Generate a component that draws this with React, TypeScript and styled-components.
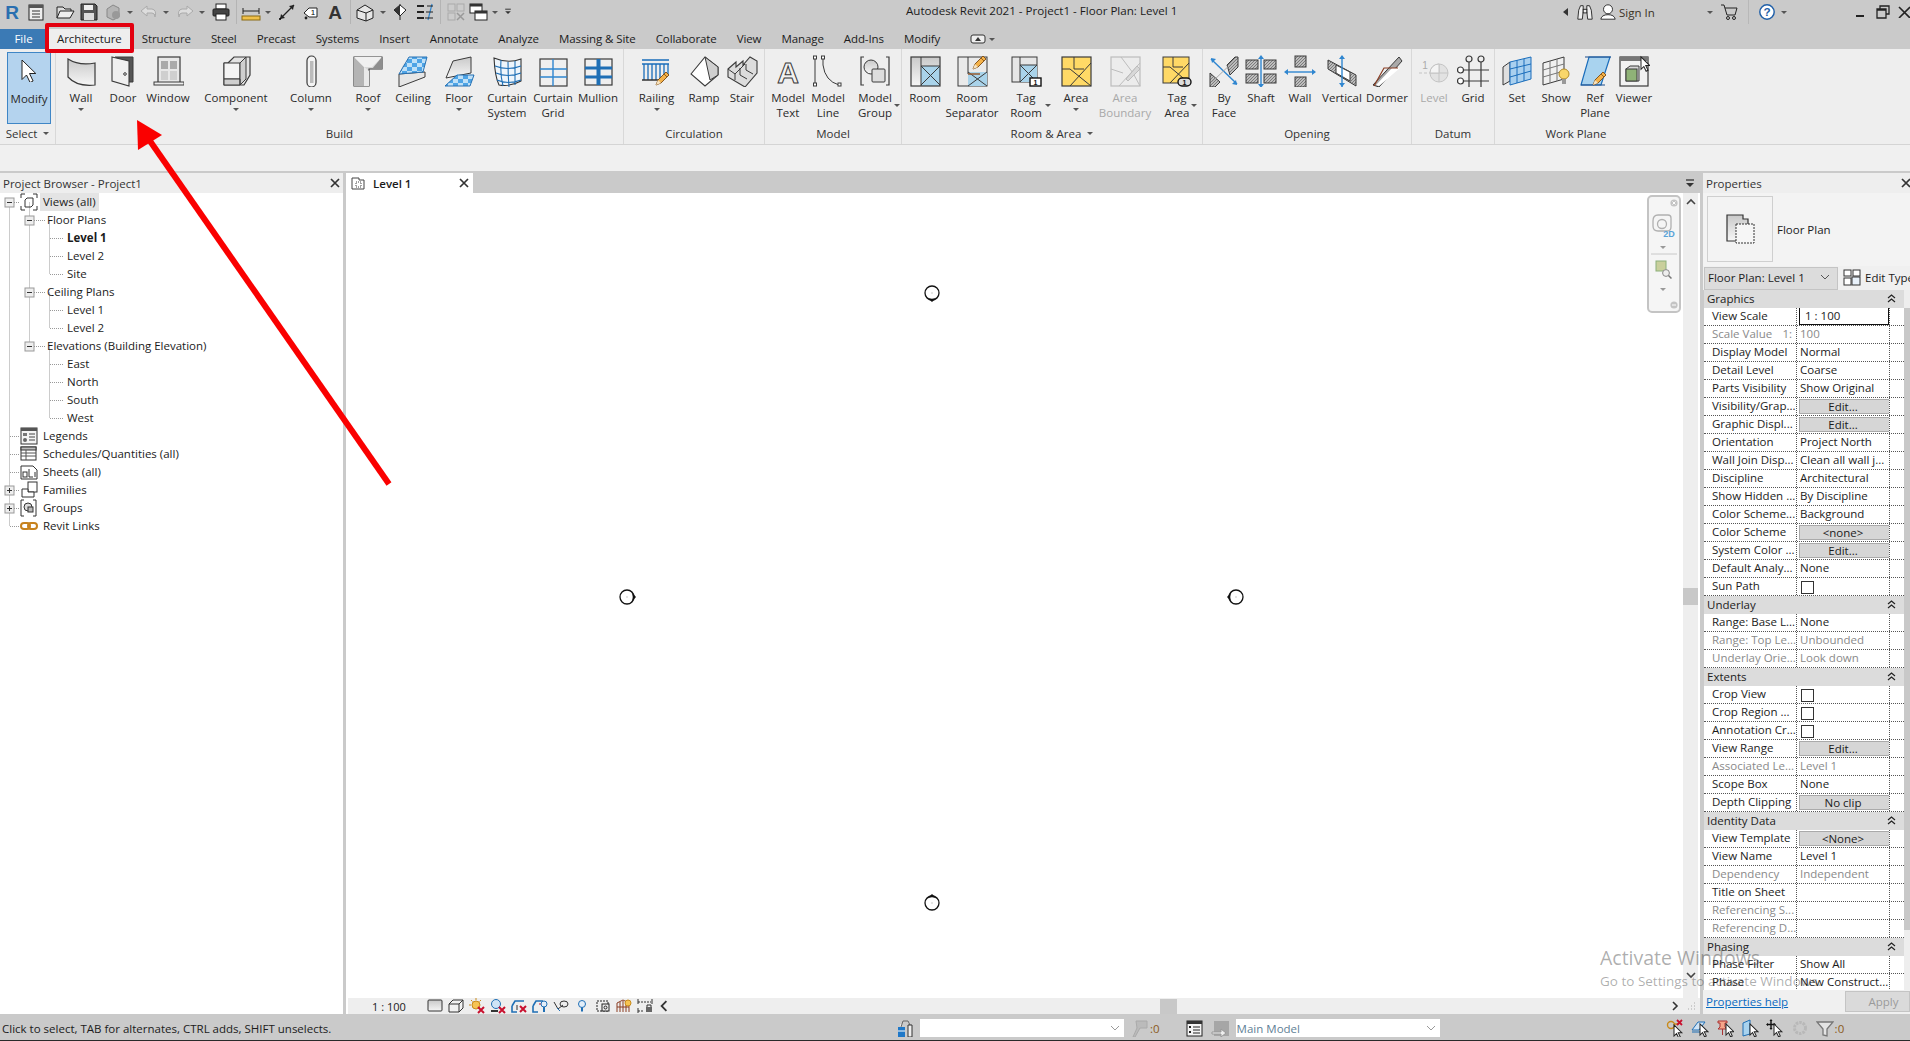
import React from "react";
import styled, { createGlobalStyle } from "styled-components";

const FONT = `"Open Sans","Noto Sans","Liberation Sans",sans-serif`;

const Global = createGlobalStyle`
  html, body { margin: 0; padding: 0; background: #cacaca; overflow: hidden; }
  * { box-sizing: border-box; }
  #root { width: 1910px; height: 1041px; }
`;

const Page = styled.div`
  position: relative; width: 1910px; height: 1041px; background: #cacaca; overflow: hidden;
  display: flex; flex-direction: column;
  font: 11.5px/15px ${FONT}; color: #1b1b1b;
`;

/* ---------- Title bar ---------- */
const TitleBar = styled.div`height: 29px; display: flex; align-items: center; flex: none;`;
const Qat = styled.div`display: flex; align-items: center; padding-bottom: 5px; flex: none;`;
const QatSlot = styled.span<{ $ml: number }>`display: flex; align-items: center; margin-left: ${p => p.$ml}px; flex: none;`;
const QatSep = styled.span<{ $ml: number }>`width: 1px; height: 24px; background: #b4b4b4; margin-left: ${p => p.$ml}px; flex: none;`;
const Caret = styled.span`width: 0; height: 0; border-left: 3px solid transparent; border-right: 3px solid transparent; border-top: 3px solid #555; display: block; flex: none;`;
const WindowTitle = styled.div`margin-left: 391px; margin-top: -9px; white-space: nowrap; flex: none; width: 274px; font-size: 11.6px;`;
const TitleRight = styled.div`display: flex; align-items: center; margin-left: auto; padding-bottom: 5px; flex: none;`;
const SignIn = styled.span`margin-left: 2px; width: 88px; color: #3a3226;`;
const TitleSep = styled.span`width: 1px; height: 24px; background: #b8b8b8; margin: 0 9px;`;
const WinBtn = styled.span<{ $ml: number }>`display: block; margin-left: ${p => p.$ml}px; flex: none;`;

/* ---------- Tabs ---------- */
const TabRow = styled.div`height: 20px; display: flex; flex: none; align-items: stretch;`;
const FileTab = styled.div`width: 47px; background: #3b7ab5; color: #fff; text-align: center; line-height: 20px;`;
const Tab = styled.div<{ $active?: boolean }>`
  padding: 0 10px; line-height: 20px; white-space: nowrap; letter-spacing: -.09px;
  background: ${p => (p.$active ? "#eeeeee" : "transparent")};
`;
const TabExtra = styled.div`display: flex; align-items: center; gap: 3px; margin-left: 20px;`;

/* ---------- Ribbon ---------- */
const Ribbon = styled.div`height: 96px; flex: none; display: flex; background: #eeeeee; border-bottom: 1px solid #d4d4d4;`;
const Panel = styled.div<{ $w: number; $last?: boolean }>`
  width: ${p => p.$w}px; flex: none; display: flex; flex-direction: column;
  border-right: ${p => (p.$last ? "none" : "1px solid #d8d8d8")};
`;
const ToolRow = styled.div`height: 75px; display: flex; flex: none;`;
const PanelTitle = styled.div`height: 20px; padding-bottom: 2px; display: flex; align-items: center; justify-content: center; gap: 6px; color: #333; white-space: nowrap;`;
const Tool = styled.div<{ $w: number; $off?: boolean }>`
  position: relative; width: ${p => p.$w}px; flex: none; display: flex; flex-direction: column; align-items: center;
  color: ${p => (p.$off ? "#a9a9a9" : "#2a2a2a")};
`;
const ToolIcon = styled.div`height: 41px; padding-top: 6px; flex: none; display: flex; justify-content: center;`;
const ToolLabel = styled.div`text-align: center; white-space: nowrap; line-height: 15px;`;
const ToolCaret = styled(Caret)`margin-top: 3px;`;
const SideCaret = styled(Caret)<{ $r: number }>`position: absolute; top: 55px; right: ${p => p.$r}px;`;
const ModifyBtn = styled.div`
  width: 44px; height: 72px; margin: 3px 0 0 7px; flex: none; border: 1px solid #3f86c6;
  background: #b4d3ee; display: flex; flex-direction: column; align-items: center; padding-top: 5px; color: #2a2a2a;
`;
const ModifyLabel = styled.div`margin-top: 9px;`;
const OptionsStrip = styled.div`height: 26px; flex: none; background: #f0f0f0;`;

/* ---------- Main ---------- */
const Main = styled.div`height: 841px; margin-top: 2px; flex: none; display: flex;`;

const Browser = styled.div`width: 343px; flex: none; display: flex; flex-direction: column;`;
const PaneTitle = styled.div`height: 20px; flex: none; display: flex; align-items: center; justify-content: space-between; padding: 0 3px; background: #eeeeee; color: #333; white-space: nowrap;`;
const PropsTitle = styled(PaneTitle)`width: 211px;`;
const Tree = styled.div`position: relative; flex: 1; background: #fff; padding-top: 0;`;
const TreeLines = styled.svg`position: absolute; left: 0; top: 0;`;
const TreeRow = styled.div<{ $pl: number; $bold?: boolean }>`
  position: relative; height: 18px; display: flex; align-items: center; padding-left: ${p => p.$pl}px;
  font-weight: ${p => (p.$bold ? 700 : 400)}; white-space: nowrap;
`;
const TreeIcon = styled.span`width: 18px; height: 18px; margin-right: 5px; display: block; flex: none;`;
const TreeText = styled.span<{ $sel?: boolean }>`
  background: ${p => (p.$sel ? "#e4e4e4" : "transparent")}; height: 18px; line-height: 18px;
  margin-left: ${p => (p.$sel ? "-3px" : "0")}; padding: 0 ${p => (p.$sel ? "3px" : "0")};
`;

const Center = styled.div`width: 356px; flex: 1; display: flex; flex-direction: column; margin-left: 3px; margin-right: 3px;`;
const DocTabs = styled.div`height: 20px; flex: none; display: flex; justify-content: space-between; align-items: center;`;
const DocTab = styled.div`width: 127px; height: 20px; background: #fff; display: flex; align-items: center; padding: 0 4px 0 4px; font-weight: 600; gap: 7px;`;
const DocTabName = styled.span`flex: 1;`;
const DocMenu = styled.span`display: block; margin-right: 5px;`;
const CanvasWrap = styled.div`flex: 1; background: #fff; display: flex; flex-direction: column; min-height: 0;`;
const CanvasRow = styled.div`flex: 1; display: flex; min-height: 0; background: #fff;`;
const Canvas = styled.div`position: relative; flex: 1; background: #fff;`;
const Marker = styled.svg<{ $x: number; $y: number }>`position: absolute; left: ${p => p.$x}px; top: ${p => p.$y}px;`;
const NavBar = styled.div`
  position: absolute; right: 2px; top: 2px; width: 34px; height: 118px; background: #f5f5f5;
  border: 2px solid #c4c4c4; border-radius: 5px;
`;
const VScroll = styled.div`width: 15px; margin-right: 2px; flex: none; background: #eeeeee; display: flex; flex-direction: column; align-items: center; justify-content: space-between; padding: 5px 0 18px; position: relative;`;
const VThumb = styled.div`position: absolute; top: 395px; left: 0; width: 15px; height: 17px; background: #c8c8c8;`;
const ViewBar = styled.div`height: 16px; margin-left: 2px; flex: none; background: #eeeeee; display: flex; align-items: center; padding-left: 24px; position: relative;`;
const ViewScale = styled.span`width: 55px; flex: none; font-size: 11px;`;
const ViewIcons = styled.div`display: flex; gap: 5px; align-items: center;`;
const HThumb = styled.div`position: absolute; left: 812px; top: 1px; width: 17px; height: 15px; background: #c8c8c8;`;
const BarEnd = styled.div`position: absolute; right: 3px; top: 0; height: 16px; width: 27px; display: flex; align-items: center; justify-content: space-between;`;

const Props = styled.div`width: 207px; flex: none; display: flex; flex-direction: column; overflow: hidden;`;
const Preview = styled.div`height: 73px; flex: none; background: #f3f3f3; display: flex; align-items: center; padding: 3px 4px 4px; gap: 4px;`;
const PreviewBox = styled.div`width: 66px; height: 66px; border: 1px solid #cfcfcf; display: flex; align-items: center; justify-content: center; flex: none;`;
const SelectRow = styled.div`height: 24px; flex: none; background: #f0f0f0; display: flex; align-items: center; padding-left: 1px; white-space: nowrap;`;
const TypeSelect = styled.div`width: 134px; height: 23px; flex: none; background: #dcdcdc; border: 1px solid #c4c4c4; display: flex; align-items: center; justify-content: space-between; padding: 0 7px 2px 3px;`;
const EditType = styled.div`display: flex; align-items: center; gap: 4px; margin-left: 5px; padding-bottom: 2px;`;
const PropArea = styled.div`flex: 1; display: flex; min-height: 0; overflow: hidden;`;
const PropList = styled.div`width: 200px; flex: none; margin-left: 1px; background: #fff; overflow: hidden;`;
const PropScroll = styled.div`flex: 1; background: #eeeeee; position: relative;`;
const PropThumb = styled.div`position: absolute; left: 0; right: 0; top: 18px; height: 622px; background: #c8c8c8;`;
const Category = styled.div`height: 18px; background: #dcdcdc; display: flex; align-items: center; justify-content: space-between; padding: 0 8px 1px 3px; color: #222; font-weight: 400;`;
const Row = styled.div<{ $off?: boolean }>`
  height: 18px; display: grid; grid-template-columns: 93px 93px 13px; border-bottom: 1px dotted #555;
  color: ${p => (p.$off ? "#8a8a8a" : "#1b1b1b")}; white-space: nowrap; line-height: 15px;
`;
const RowLabel = styled.div`padding-left: 8px; border-right: 1px dotted #555; overflow: hidden; display: flex; justify-content: space-between; padding-right: 4px;`;
const RowValue = styled.div`padding-left: 3px; border-right: 1px dotted #555; overflow: hidden;`;
const RowFocus = styled.div`border: 1px solid #111; height: 18px; margin: -1px 0 0 -1px; padding-left: 5px; background: #fff;`;
const RowButton = styled.div`margin: 1px 0 0 -1px; width: 91px; height: 15px; line-height: 13px; padding-right: 3px; background: #d6d6d6; border: 1px solid #aaaaaa; text-align: center; color: #1b1b1b;`;
const Check = styled.div`width: 13px; height: 13px; border: 1px solid #333; margin: 3px 0 0 1px; background: #fff;`;
const HelpRow = styled.div`height: 24px; flex: none; background: #f0f0f0; display: flex; align-items: center; justify-content: space-between; padding-left: 3px;`;
const HelpLink = styled.a`color: #0a6ac0; text-decoration: underline; margin-top: -1px;`;
const ApplyBtn = styled.div`width: 65px; height: 21px; background: #dadada; border: 1px solid #c4c4c4; color: #9a9a9a; display: flex; align-items: center; justify-content: center; padding-left: 12px; margin-top: -1px;`;

/* ---------- Status ---------- */
const Status = styled.div`height: 27px; flex: none; display: flex; align-items: center; border-bottom: 1px solid #2a2a2a; padding-top: 2px;`;
const StatusText = styled.div`width: 896px; padding-left: 2px; flex: none; white-space: nowrap;`;
const Combo = styled.div<{ $ml: number }>`
  width: 204px; height: 18px; margin-left: ${p => p.$ml}px; background: #fff; flex: none; display: flex;
  align-items: center; justify-content: space-between; padding: 0 4px 0 1px; color: #5f7f96;
`;
const StatusSlot = styled.span<{ $ml: number }>`display: flex; align-items: center; margin-left: ${p => p.$ml}px; flex: none;`;
const Count = styled.span`color: #8a5a1a; margin-left: 1px;`;

/* ---------- Overlays ---------- */
const RedBox = styled.div`position: absolute; left: 45px; top: 23px; width: 89px; height: 30px; border: 4px solid #e3000f; border-radius: 2px;`;
const ArrowLayer = styled.svg`position: absolute; left: 0; top: 0; pointer-events: none;`;
const Watermark = styled.div`position: absolute; left: 1600px; top: 944px; color: rgba(60,60,60,.42); white-space: nowrap; pointer-events: none;`;
const WmBig = styled.div`font-size: 19.5px; line-height: 27px;`;
const WmSmall = styled.div`font-size: 13.5px; line-height: 20px;`;
const Hidden = styled.svg`position: absolute; width: 0; height: 0;`;

/* ---------- Icon helpers ---------- */
const Ic: React.FC<{ s?: number; v?: number; children: React.ReactNode }> = ({ s = 32, v = 32, children }) => (
  <svg width={s} height={s} viewBox={`0 0 ${v} ${v}`} style={{ display: "block", flex: "none" }}>{children}</svg>
);
const K = "#3a3a3a";
const BL = "#2f86d0";
const Pencil = ({ x, y }: { x: number; y: number }) => (
  <g transform={`translate(${x} ${y})`}>
    <path d="M0 13l2-5L10 0l3 3-8 8z" fill="#f4b24a" stroke="#7a4a12" strokeWidth=".9" />
    <path d="M0 13l2-5 3 3z" fill="#f7e3c0" />
    <path d="M8 2l3 3" stroke="#7a4a12" strokeWidth=".8" />
  </g>
);
const Cur = ({ x, y, k = 1 }: { x: number; y: number; k?: number }) => (
  <path transform={`translate(${x} ${y}) scale(${k})`} d="M0 0v13l3-3 2.4 5 2-1-2.4-5h4.2z" fill="#fff" stroke="#222" strokeWidth={1 / k} />
);
const Tag1 = ({ x, y, round }: { x: number; y: number; round?: boolean }) => (
  <g>
    <rect x={x} y={y} width={round ? 13 : 11} height="8" rx={round ? 4 : 0} fill={round ? "#ddd" : "#fff"} stroke="#111" strokeWidth="1.4" />
    <text x={x + (round ? 6.5 : 5.5)} y={y + 6.8} fontSize="7" fontWeight="700" textAnchor="middle" fontFamily="Liberation Sans" fill="#111">1</text>
  </g>
);
const Blue2 = ({ d }: { d: string }) => <path d={d} stroke={BL} strokeWidth="1.4" fill="none" />;

const ribbonIcons: Record<string, React.ReactNode> = {
  wall: <path d="M3 4Q14 11 30 8V30Q12 32 3 22Z" fill="url(#gv)" stroke={K} strokeWidth="1.2" />,
  door: <g><path d="M8 2H26V27H22" fill="#555" stroke={K} /><path d="M5 2l17 4v25L5 26z" fill="#efefef" stroke={K} strokeWidth="1.1" /><circle cx="18" cy="19" r="1.3" fill="none" stroke={K} /></g>,
  window: <g><rect x="6" y="2" width="22" height="26" fill="#e8e8e8" stroke={K} strokeWidth="1.2" /><rect x="9" y="6" width="7" height="8" fill="#aaa" /><rect x="18" y="6" width="7" height="8" fill="#aaa" /><rect x="9" y="16" width="7" height="9" fill="#cfcfcf" /><rect x="18" y="16" width="7" height="9" fill="#cfcfcf" /><rect x="2" y="27" width="30" height="3" fill="#eee" stroke={K} /></g>,
  component: <g><path d="M8 8l6-6h16v18l-6 10H4V8z" fill="#e3e3e3" stroke={K} strokeWidth="1.2" /><path d="M4 8h16v16H4z" fill="#f4f4f4" stroke={K} /><path d="M20 8l6-6v22l-6 6zM4 24h16v6H4z" fill="#cfcfcf" stroke={K} /></g>,
  column: <g><rect x="12" y="1" width="9" height="31" rx="4.5" fill="#f4f4f4" stroke={K} strokeWidth="1.2" /><rect x="15" y="6" width="3.5" height="22" fill="#bbb" /></g>,
  roof: <g><path d="M2 2H30V14H17V31H2Z" fill="#d8d8d8" stroke={K} strokeWidth="1.1" /><path d="M2 2L12 12V31H2Z" fill="#b4b4b4" /><path d="M2 2H30L20 12H12Z" fill="#f0f0f0" /><path d="M30 2V14H20z" fill="#8e8e8e" /><path d="M12 31V12L17 16V31Z" fill="#e9e9e9" /></g>,
  ceiling: <g><path d="M2 32V19L7 8L4 22z" fill="#ccc" /><path d="M2 32V19l26-2v5z" fill="#e6e6e6" stroke={K} /><path d="M2 19L12 2H30L26 17Z" fill="url(#ck)" stroke="#2671b3" /></g>,
  floor: <g><path d="M3 23L10 6 28 2V18L3 23z" fill="url(#gv)" stroke={K} /><path d="M2 31L14 20H31L27 31Z" fill="url(#ck)" stroke="#2671b3" /></g>,
  cursys: <g fill="none" stroke="#1f6fb5" strokeWidth="1.1"><path d="M3 3Q17 9 30 4V26Q19 32 8 30Q4 22 3 3Z" fill="#eef5fb" stroke="#333" /><path d="M4 11Q17 16 30 11M5 18Q17 23 30 18M6 25Q17 30 30 25M10 5Q9 20 12 31M17 7Q17 20 18 32M24 6V30" /></g>,
  curgrid: <g><rect x="3" y="4" width="27" height="27" fill="#efefef" stroke={K} strokeWidth="1.2" /><path d="M3 14H30M3 22H30M16 4V31" stroke={BL} strokeWidth="1.4" /></g>,
  mullion: <g><rect x="3" y="4" width="27" height="26" fill="#efefef" stroke={K} strokeWidth="1.2" /><path d="M3 13H30M3 22H30" stroke="#1f6fb5" strokeWidth="3" /><path d="M16.5 4V30" stroke="#1f6fb5" strokeWidth="4" /></g>,
  railing: <g><path d="M1 5H28M1 9H28" stroke="#1a6dbb" strokeWidth="1.7" /><path d="M3 9V25M7 9V25M11 9V25M15 9V25M19 9V25M23 9V25M27 9V20" stroke="#1a6dbb" strokeWidth="1.3" /><path d="M1 25H22" stroke="#333" strokeWidth="1.5" /><Pencil x={15} y={17} /></g>,
  ramp: <g><path d="M3 19L17 2 30 12V20L17 31Z" fill="#fff" stroke={K} strokeWidth="1.1" /><path d="M17 2L30 12V20L22 25Z" fill="#cfcfcf" stroke={K} /></g>,
  stair: <g><path d="M2 14L10 7V12L17 6V10L24 2 31 6V18L19 32 2 22Z" fill="#dcdcdc" stroke={K} strokeWidth="1.1" /><path d="M2 14L9 19 19 9M9 19V25M14 13V20L21 24M20 9V15L27 19" fill="none" stroke={K} /></g>,
  mtext: <g><text x="16" y="28" fontSize="30" fontWeight="700" textAnchor="middle" fontFamily="Liberation Sans" fill="#f2f2f2" stroke={K} strokeWidth="1">A</text></g>,
  mline: <g><path d="M3 2V30M11 3V10Q13 26 27 30" fill="none" stroke={K} /><rect x="1.5" y="1" width="3" height="3" fill="#fff" stroke={K} /><rect x="1.5" y="28" width="3" height="3" fill="#fff" stroke={K} /><rect x="9.5" y="1" width="3" height="3" fill="#fff" stroke={K} /><rect x="26" y="28" width="3" height="3" fill="#fff" stroke={K} /></g>,
  mgroup: <g><path d="M5 2H2V30H5M27 2H30V30H27" fill="none" stroke={K} strokeWidth="1.2" /><circle cx="12" cy="12" r="7" fill="url(#gv)" stroke={K} /><rect x="13" y="14" width="13" height="13" rx="1" fill="#ddd" stroke={K} /></g>,
  room: <g><rect x="2" y="2" width="29" height="29" fill="url(#gv)" /><rect x="12" y="11" width="19" height="20" fill="#a9d3ea" /><path d="M12 2V31M12 11H31M12 11L31 30M31 11L12 30" stroke={K} /><rect x="2" y="2" width="29" height="29" fill="none" stroke={K} strokeWidth="1.2" /></g>,
  roomsep: <g><rect x="2" y="2" width="29" height="29" fill="#eaeaea" stroke={K} /><rect x="12" y="17" width="19" height="14" fill="#a9d3ea" /><path d="M12 2V19H24M12 17L31 31M31 17L12 31" stroke={K} fill="none" /><path d="M12 19H24" stroke="#c66a2a" /><Pencil x={17} y={1} /></g>,
  tagroom: <g><rect x="2" y="2" width="25" height="25" fill="#e6e6e6" stroke={K} /><rect x="10" y="10" width="17" height="17" fill="#a9d3ea" /><path d="M10 2V27M10 10H27M10 10L27 27M27 10L10 27" stroke={K} /><Tag1 x={20} y={23} /></g>,
  area: <g><rect x="2" y="2" width="29" height="29" fill="#ffd966" stroke={K} strokeWidth="1.2" /><path d="M2 14H10L31 31M31 8L10 31M14 2V14H24" fill="none" stroke={K} /></g>,
  areab: <g><rect x="2" y="2" width="29" height="29" fill="#ececec" stroke="#bdbdbd" strokeWidth="1.2" /><path d="M2 14L14 18M31 8L10 31M12 2L24 18L31 31" fill="none" stroke="#bdbdbd" /><path d="M17 24L28 11l3 3-12 12z" fill="#d8d8d8" stroke="#bbb" /></g>,
  tagarea: <g><rect x="2" y="2" width="26" height="26" fill="#ffd966" stroke={K} /><path d="M2 12H9L28 28M28 8L9 28M12 2V12H22" fill="none" stroke={K} /><Tag1 x={17} y={23} round /></g>,
  byface: <g><path d="M2 30V18L12 27 7 32H2ZM19 10L27 2H30V12L22 20Z" fill="url(#ht)" stroke={K} /><path d="M3 4L29 29" stroke={BL} strokeWidth="1.4" /><path d="M3 3l1 5 4-4zM29 30l-1-5-4 4z" fill={BL} /><path d="M28 4L4 27" stroke="#aaa" /></g>,
  shaft: <g><rect x="1" y="5" width="12" height="9" fill="url(#ht)" stroke={K} /><rect x="19" y="5" width="12" height="9" fill="url(#ht)" stroke={K} /><rect x="1" y="19" width="12" height="9" fill="url(#ht)" stroke={K} /><rect x="19" y="19" width="12" height="9" fill="url(#ht)" stroke={K} /><Blue2 d="M16 2V31" /><path d="M16 0l-3 4h6zM16 33l-3-4h6z" fill={BL} /></g>,
  wallop: <g><rect x="11" y="1" width="11" height="11" fill="url(#ht)" stroke={K} /><rect x="11" y="22" width="11" height="10" fill="url(#ht)" stroke={K} /><Blue2 d="M2 17H31" /><path d="M0 17l4-3v6zM32 17l-4-3v6z" fill={BL} /></g>,
  vertical: <g><path d="M2 5L30 20V31L2 14Z" fill="url(#ht)" stroke={K} /><path d="M10 10L24 17V26L10 18Z" fill="#fff" stroke={K} /><Blue2 d="M16 1V32" /><path d="M16 0l-3 4h6zM16 32l-3-4h6z" fill={BL} /></g>,
  dormer: <g><path d="M2 30L28 2 31 6 8 32Z" fill="#aaa" stroke={K} /><path d="M5 30L21 13h8L8 31z" fill="#fff" /><path d="M3 31L13 13H27" fill="none" stroke="#8a3d22" strokeWidth="1.2" /></g>,
  level: <g stroke="#c4c4c4"><path d="M1 18H12" strokeDasharray="3 2" /><circle cx="21" cy="18" r="9" fill="#e2e2e2" /><path d="M21 9V27M12 18H30" /><path d="M12 18a9 9 0 0 1 9-9V18z" fill="#f4f4f4" /><text x="7" y="14" fontSize="10" fontFamily="Liberation Sans" fill="#aaa" stroke="none" textAnchor="middle">1</text></g>,
  grid: <g fill="none" stroke={K} strokeWidth="1.2"><path d="M12 7V32M24 7V32M6 15H32M6 26H32" /><circle cx="12" cy="4" r="3" /><circle cx="24" cy="4" r="3" /><circle cx="3.5" cy="15" r="3" fill="#fff" /><circle cx="3.5" cy="26" r="3" fill="#fff" /></g>,
  set: <g><path d="M2 12L9 7V26L2 30Z" fill="#dfdfdf" stroke={K} /><path d="M9 7L30 2V24L9 30Z" fill="#a9d0ef" stroke="#1a6dbb" /><path d="M9 14L30 9M9 22L30 16M16 5V28M23 4V26" stroke="#1a6dbb" fill="none" /></g>,
  show: <g><path d="M3 8L24 2V24L3 30Z" fill="#f0f0f0" stroke={K} /><path d="M3 15L24 9M3 22L24 16M10 6V28M17 4V26" stroke="#777" fill="none" /><circle cx="24" cy="19" r="5" fill="#f9d66b" stroke="#b08a2a" /><rect x="22" y="24" width="4" height="5" fill="#999" /></g>,
  refplane: <g><path d="M10 2H31L22 30H2Z" fill="#a9d3ef" stroke="#1a6dbb" strokeWidth="1.2" /><path d="M2 30H26M6 2H32" stroke="#1a4d8b" /><Pencil x={14} y={17} /></g>,
  viewer: <g><rect x="2" y="2" width="28" height="29" fill="#f2f2f2" stroke={K} strokeWidth="1.2" /><rect x="2" y="2" width="28" height="4" fill="#777" /><path d="M8 14l4-3h9v15H8z" fill="#d8d8d8" stroke={K} /><rect x="8" y="14" width="11" height="12" fill="#8fb277" stroke={K} /><Cur x={23} y={2} k={.95} /></g>,
};

const Modify = () => <Ic s={24} v={24}><Cur x={5} y={2} k={1.5} /></Ic>;

const q: Record<string, React.ReactNode> = {
  r: <text x="9" y="17" fontSize="19" fontWeight="700" textAnchor="middle" fontFamily="Liberation Sans" fill="#2a6fb0">R</text>,
  doc: <g><rect x="3" y="3" width="14" height="15" fill="#eee" stroke="#222" /><rect x="3" y="3" width="14" height="3" fill="#555" /><path d="M6 9h8M6 12h8M6 15h8" stroke="#333" /></g>,
  open: <g><path d="M2 16V5h6l2 2h6v3" fill="#ddd" stroke="#222" /><path d="M2 16l3-7h14l-4 7z" fill="#eee" stroke="#222" /></g>,
  save: <g><path d="M2 2H16L18 4V18H2Z" fill="#555" stroke="#222" /><rect x="5" y="3" width="9" height="5" fill="#eee" /><rect x="5" y="11" width="10" height="7" fill="#ddd" /></g>,
  sync: <g><path d="M4 7l6-4 6 3v9l-6 3-6-3z" fill="#b5b5b5" stroke="#888" /><circle cx="13" cy="13" r="4" fill="#999" /></g>,
  undo: <path d="M8 4L2 9l6 5v-3h5q3 0 3 4 2-7-3-8H8z" fill="#ddd" stroke="#aaa" />,
  redo: <path d="M12 4l6 5-6 5v-3H7q-3 0-3 4-2-7 3-8h5z" fill="#ddd" stroke="#aaa" />,
  print: <g><rect x="5" y="2" width="10" height="5" fill="#fff" stroke="#222" /><rect x="2" y="7" width="16" height="7" rx="1" fill="#444" stroke="#222" /><rect x="5" y="12" width="10" height="6" fill="#fff" stroke="#222" /></g>,
  measure: <g><path d="M2 9H18M2 6v6M18 6v6" stroke="#222" fill="none" /><rect x="1" y="14" width="18" height="4" fill="#f0c14b" stroke="#8a6a14" /></g>,
  aligned: <g><path d="M3 17L17 3" stroke="#222" strokeWidth="1.3" /><path d="M17 3l-5 1 4 4zM3 17l5-1-4-4z" fill="#222" /><circle cx="3" cy="17" r="1" /></g>,
  tag: <g><path d="M2 11l5-5h8v9H7z" fill="#fff" stroke="#222" /><text x="11" y="13" fontSize="8" fontFamily="Liberation Sans" textAnchor="middle">1</text><circle cx="4" cy="16" r="1.4" fill="#222" /></g>,
  a: <text x="10" y="17" fontSize="19" fontWeight="700" textAnchor="middle" fontFamily="Liberation Sans" fill="#333">A</text>,
  house: <g><path d="M2 8l8-5 8 5v8l-7 3-9-3z" fill="#e6e6e6" stroke="#222" /><path d="M2 8l9 3 7-3M11 11v8" fill="none" stroke="#222" /></g>,
  section: <g><path d="M10 2V18" stroke="#222" /><path d="M4 8l6-5 6 5-6 6z" fill="#fff" stroke="#222" /><path d="M10 3l-6 5 6 6z" fill="#333" /></g>,
  thin: <g><path d="M2 4h7M2 10h7M2 16h7" stroke="#222" strokeWidth="2" /><path d="M13 18L17 2" stroke={BL} strokeWidth="1.2" /><path d="M12 4h6M11 10h7M10 16h8" stroke="#222" /></g>,
  close: <g><rect x="2" y="2" width="7" height="7" fill="#ccc" stroke="#aaa" /><rect x="11" y="2" width="7" height="7" fill="#ccc" stroke="#aaa" /><rect x="2" y="11" width="7" height="7" fill="#ccc" stroke="#aaa" /><path d="M11 11l7 7M18 11l-7 7" stroke="#999" strokeWidth="1.5" /></g>,
  sw: <g><rect x="2" y="2" width="12" height="9" fill="#fff" stroke="#222" /><rect x="2" y="2" width="12" height="2.5" fill="#333" /><rect x="7" y="9" width="12" height="9" fill="#fff" stroke="#222" /><rect x="7" y="9" width="12" height="2.5" fill="#333" /></g>,
  drop: <g><path d="M6 6h8" stroke="#333" strokeWidth="1.4" /><path d="M6 9h8l-4 4z" fill="#333" /></g>,
  bino: <g fill="#eee" stroke="#222"><path d="M3 8l2-5h3v6l-1 9H2zM17 8l-2-5h-3v6l1 9h5z" /><rect x="8" y="7" width="4" height="4" /></g>,
  user: <g fill="#fff" stroke="#222"><circle cx="10" cy="7" r="5" /><path d="M2 18q1-5 8-5t8 5z" /></g>,
  cart: <g fill="none" stroke="#222"><path d="M2 3h3l3 10h8l2-7H6" /><circle cx="9" cy="16" r="1.5" /><circle cx="15" cy="16" r="1.5" /></g>,
  help: <g><circle cx="10" cy="10" r="8" fill="#fff" stroke="#1f5fa8" strokeWidth="1.6" /><text x="10" y="14.5" fontSize="13" fontWeight="700" textAnchor="middle" fontFamily="Liberation Sans" fill="#1f5fa8">?</text></g>,
};

const tree: Record<string, React.ReactNode> = {
  views: <g fill="none" stroke="#333"><path d="M1 5V1H5M13 1H17V5M17 13V17H13M5 17H1V13" /><path d="M5 7l2-2h6v7l-2 2H5z" /></g>,
  legends: <g><rect x="1" y="1" width="16" height="16" fill="#f4f4f4" stroke="#333" /><rect x="1" y="1" width="16" height="3" fill="#555" /><rect x="3" y="6" width="4" height="3" fill="#777" /><path d="M9 7h6M9 10h6M9 13h6" stroke="#444" /><circle cx="5" cy="13" r="2" fill="#666" /></g>,
  sched: <g><rect x="1" y="2" width="15" height="13" fill="#fff" stroke="#333" /><rect x="1" y="2" width="15" height="3" fill="#bbb" stroke="#333" /><path d="M1 8h15M1 11h15M6 5v10" stroke="#555" /></g>,
  sheets: <g fill="#fff" stroke="#333"><path d="M1 3H13L17 7V16H1Z" /><rect x="3" y="9" width="4" height="5" /><path d="M9 6V14H13M15 9v5" fill="none" /></g>,
  fam: <g fill="#fff" stroke="#333"><rect x="8" y="1" width="9" height="10" /><path d="M2 8H8V11H14V16H2Z" /></g>,
  groups: <g fill="none" stroke="#333"><path d="M4 1H1V17H4M13 1H16V17H13" /><circle cx="8" cy="8" r="4" fill="#ddd" /><rect x="8" y="8" width="5" height="5" fill="#bbb" /></g>,
  links: <g fill="none" stroke="#c7821d" strokeWidth="2"><rect x="1" y="6" width="9" height="6" rx="3" /><rect x="8" y="6" width="9" height="6" rx="3" /></g>,
};

const vb: React.ReactNode[] = [
  <g><rect x="1" y="2" width="14" height="11" rx="1" fill="url(#gv)" stroke="#333" /></g>,
  <g><path d="M1 6l4-4h10v8l-4 4H1z" fill="#f2f2f2" stroke="#333" /><path d="M1 6h10v8M11 6l4-4" fill="none" stroke="#333" /></g>,
  <g><circle cx="7" cy="7" r="4" fill="#f6c453" stroke="#c98a1a" /><path d="M7 0v2M0 7h2M2 2l1.5 1.5M12 2l-1.5 1.5" stroke="#c98a1a" /><path d="M9 9l6 6M15 9l-6 6" stroke="#c8102e" strokeWidth="2" /></g>,
  <g><circle cx="6" cy="6" r="4.5" fill="#cfe4f6" stroke="#1f6fb5" /><path d="M1 13h7" stroke="#333" strokeWidth="2" /><path d="M9 9l6 6M15 9l-6 6" stroke="#c8102e" strokeWidth="2" /></g>,
  <g><path d="M1 8L4 3H13M1 8V14H6" fill="none" stroke="#1f6fb5" strokeWidth="1.6" /><path d="M6 7v5" stroke="#333" /><path d="M9 8l6 6M15 8l-6 6" stroke="#c8102e" strokeWidth="2" /></g>,
  <g><path d="M1 8L4 3H11M1 8V14H6" fill="none" stroke="#1f6fb5" strokeWidth="1.6" /><path d="M7 6h5" stroke="#c8102e" /><circle cx="12" cy="6" r="3" fill="#e3eef9" stroke="#1f6fb5" /><rect x="11" y="9" width="2" height="5" fill="#1f6fb5" /></g>,
  <g fill="none" stroke="#333"><path d="M1 4l4 7 5-4" /><ellipse cx="11" cy="6" rx="4" ry="3" /><path d="M4 10l3 3" stroke="#1f6fb5" /></g>,
  <g><circle cx="8" cy="6" r="3.5" fill="#e3eef9" stroke="#1f6fb5" /><rect x="7" y="9.5" width="2" height="4" fill="#1f6fb5" /></g>,
  <g fill="none" stroke="#222"><rect x="2" y="3" width="11" height="10" strokeDasharray="2 1" /><rect x="7" y="6" width="7" height="7" fill="#eee" /><circle cx="10.5" cy="9.5" r="1.5" /></g>,
  <g><path d="M1 14V5l6-3 6 3v9" fill="none" stroke="#8a3d22" /><path d="M4 4v10M7 3v11M10 4v10M1 9h12" stroke="#8a3d22" /><circle cx="12" cy="5" r="3" fill="#f6c453" stroke="#c98a1a" /></g>,
  <g><path d="M1 1v5M1 10v5M15 1v5" stroke="#333" /><path d="M1 4h13M1 13h6" stroke="#333" strokeDasharray="2 1" /><rect x="9" y="9" width="6" height="5" fill="#666" /><path d="M10 9V7h4v2" fill="none" stroke="#333" /></g>,
];

const st: Record<string, React.ReactNode> = {
  work: <g><rect x="2" y="8" width="7" height="10" fill="#1f78c8" /><path d="M5 8V5M2 12h7" stroke="#fff" /><path d="M5 8l2-6h5l2 4" fill="none" stroke="#666" /><path d="M12 6v12h4V6z" fill="#eee" stroke="#333" /></g>,
  design: <g><path d="M5 2h11v7H9l-5 9H2l4-9z" fill="#bbb" stroke="#aaa" /></g>,
  list: <g><rect x="2" y="2" width="15" height="15" fill="#f4f4f4" stroke="#222" /><rect x="2" y="2" width="15" height="3" fill="#333" /><path d="M8 8h7M8 11h7M8 14h7" stroke="#222" /><rect x="4" y="7" width="2" height="2" fill="#222" /><rect x="4" y="12" width="2" height="2" fill="#222" /></g>,
  edit: <g><rect x="3" y="2" width="15" height="15" fill="#a6a6a6" /><path d="M1 13h9v-3l5 4-5 4v-3H1z" fill="#eee" stroke="#999" /></g>,
  s1: <g><circle cx="5" cy="6" r="3.5" fill="none" stroke="#c98a1a" strokeWidth="1.4" /><path d="M8 5H13" stroke="#c98a1a" strokeWidth="1.4" /><path d="M11 1l5 5M16 1l-5 5" stroke="#c8102e" strokeWidth="1.8" /><Cur x={8} y={6} k={.85} /></g>,
  s2: <g><path d="M1 11L7 3H14L8 11ZM1 13H10" fill="#cfe4f6" stroke="#1f6fb5" /><Cur x={9} y={5} k={.85} /></g>,
  s3: <g><path d="M2 2H11V4H9V8L11 10H2L4 8V4H2Z" fill="#f5a58a" stroke="#a33" /><path d="M6.5 10V16" stroke="#a33" /><Cur x={10} y={5} k={.85} /></g>,
  s4: <g><path d="M2 4L9 1V15L2 17Z" fill="#a9d3ef" stroke="#1f6fb5" /><Cur x={9} y={5} k={.85} /></g>,
  s5: <g><path d="M5 1V10M1 5.5H9" stroke="#111" strokeWidth="1.4" /><path d="M5 0L3.5 2h3zM5 11L3.5 9h3zM0 5.5l2-1.5v3zM10 5.5L8 4v3z" fill="#111" /><Cur x={8} y={5} k={.85} /></g>,
  s6: <g><circle cx="9" cy="9" r="5.5" fill="none" stroke="#b8b8b8" strokeWidth="3" strokeDasharray="2.5 1" /></g>,
  s7: <path d="M1 3H17L11 10V17L7 16V10Z" fill="#e4e4e4" stroke="#777" strokeWidth="1.3" />,
};

/* ---------- Data ---------- */
type T = { k: string; w: number; l: React.ReactNode; caret?: boolean; side?: number; off?: boolean };
const panels: { title: string; w: number; titleCaret?: boolean; tools: T[] }[] = [
  { title: "Build", w: 568, tools: [
    { k: "wall", w: 50, l: "Wall", caret: true }, { k: "door", w: 34, l: "Door" }, { k: "window", w: 56, l: "Window" },
    { k: "component", w: 80, l: "Component", caret: true }, { k: "column", w: 70, l: "Column", caret: true },
    { k: "roof", w: 44, l: "Roof", caret: true }, { k: "ceiling", w: 46, l: "Ceiling" }, { k: "floor", w: 46, l: "Floor", caret: true },
    { k: "cursys", w: 50, l: <>Curtain<br />System</> }, { k: "curgrid", w: 42, l: <>Curtain<br />Grid</> }, { k: "mullion", w: 48, l: "Mullion" },
  ] },
  { title: "Circulation", w: 141, tools: [
    { k: "railing", w: 65, l: "Railing", caret: true }, { k: "ramp", w: 30, l: "Ramp" }, { k: "stair", w: 46, l: "Stair" },
  ] },
  { title: "Model", w: 137, tools: [
    { k: "mtext", w: 46, l: <>Model<br />Text</> }, { k: "mline", w: 34, l: <>Model<br />Line</> }, { k: "mgroup", w: 60, l: <>Model<br />Group</>, side: 5 },
  ] },
  { title: "Room & Area", w: 301, titleCaret: true, tools: [
    { k: "room", w: 46, l: "Room" }, { k: "roomsep", w: 48, l: <>Room<br />Separator</> }, { k: "tagroom", w: 60, l: <>Tag<br />Room</>, side: 5 },
    { k: "area", w: 40, l: "Area", caret: true }, { k: "areab", w: 58, l: <>Area<br />Boundary</>, off: true }, { k: "tagarea", w: 46, l: <>Tag<br />Area</>, side: 3 },
  ] },
  { title: "Opening", w: 209, tools: [
    { k: "byface", w: 42, l: <>By<br />Face</> }, { k: "shaft", w: 32, l: "Shaft" }, { k: "wallop", w: 46, l: "Wall" }, { k: "vertical", w: 38, l: "Vertical" }, { k: "dormer", w: 52, l: "Dormer" },
  ] },
  { title: "Datum", w: 83, tools: [{ k: "level", w: 44, l: "Level", off: true }, { k: "grid", w: 34, l: "Grid" }] },
  { title: "Work Plane", w: 162, tools: [
    { k: "set", w: 44, l: "Set" }, { k: "show", w: 34, l: "Show" }, { k: "refplane", w: 44, l: <>Ref<br />Plane</> }, { k: "viewer", w: 34, l: "Viewer" },
  ] },
];

const tabs = ["Architecture", "Structure", "Steel", "Precast", "Systems", "Insert", "Annotate", "Analyze", "Massing & Site", "Collaborate", "View", "Manage", "Add-Ins", "Modify"];

const qat: { k?: string; ml: number; t: "i" | "c" | "s" }[] = [
  { k: "r", ml: 3, t: "i" }, { k: "doc", ml: 3, t: "i" }, { k: "open", ml: 9, t: "i" }, { k: "save", ml: 4, t: "i" }, { k: "sync", ml: 4, t: "i" },
  { ml: 4, t: "c" }, { k: "undo", ml: 6, t: "i" }, { ml: 4, t: "c" }, { k: "redo", ml: 6, t: "i" }, { ml: 4, t: "c" }, { k: "print", ml: 6, t: "i" },
  { ml: 5, t: "s" }, { k: "measure", ml: 4, t: "i" }, { ml: 4, t: "c" }, { k: "aligned", ml: 6, t: "i" }, { k: "tag", ml: 5, t: "i" }, { k: "a", ml: 3, t: "i" },
  { ml: 5, t: "s" }, { k: "house", ml: 4, t: "i" }, { ml: 5, t: "c" }, { k: "section", ml: 4, t: "i" }, { k: "thin", ml: 5, t: "i" },
  { ml: 5, t: "s" }, { k: "close", ml: 5, t: "i" }, { k: "sw", ml: 2, t: "i" }, { ml: 4, t: "c" }, { k: "drop", ml: 3, t: "i" },
];

type R = { l: React.ReactNode; v?: React.ReactNode; kind?: "btn" | "check" | "focus"; off?: boolean };
const sections: { name: string; rows: R[] }[] = [
  { name: "Graphics", rows: [
    { l: "View Scale", v: "1 : 100", kind: "focus" }, { l: <><span>Scale Value</span><span>1:</span></>, v: "100", off: true },
    { l: "Display Model", v: "Normal" }, { l: "Detail Level", v: "Coarse" }, { l: "Parts Visibility", v: "Show Original" },
    { l: "Visibility/Grap...", v: "Edit...", kind: "btn" }, { l: "Graphic Displ...", v: "Edit...", kind: "btn" },
    { l: "Orientation", v: "Project North" }, { l: "Wall Join Disp...", v: "Clean all wall j..." }, { l: "Discipline", v: "Architectural" },
    { l: "Show Hidden ...", v: "By Discipline" }, { l: "Color Scheme...", v: "Background" }, { l: "Color Scheme", v: "<none>", kind: "btn" },
    { l: "System Color ...", v: "Edit...", kind: "btn" }, { l: "Default Analy...", v: "None" }, { l: "Sun Path", kind: "check" },
  ] },
  { name: "Underlay", rows: [
    { l: "Range: Base L...", v: "None" }, { l: "Range: Top Le...", v: "Unbounded", off: true }, { l: "Underlay Orie...", v: "Look down", off: true },
  ] },
  { name: "Extents", rows: [
    { l: "Crop View", kind: "check" }, { l: "Crop Region ...", kind: "check" }, { l: "Annotation Cr...", kind: "check" },
    { l: "View Range", v: "Edit...", kind: "btn" }, { l: "Associated Le...", v: "Level 1", off: true }, { l: "Scope Box", v: "None" }, { l: "Depth Clipping", v: "No clip", kind: "btn" },
  ] },
  { name: "Identity Data", rows: [
    { l: "View Template", v: "<None>", kind: "btn" }, { l: "View Name", v: "Level 1" }, { l: "Dependency", v: "Independent", off: true },
    { l: "Title on Sheet" }, { l: "Referencing S...", off: true }, { l: "Referencing D...", off: true },
  ] },
  { name: "Phasing", rows: [{ l: "Phase Filter", v: "Show All" }, { l: "Phase", v: "New Construct..." }] },
];

const treeRows: { t: string; pl: number; ic?: string; bold?: boolean; sel?: boolean }[] = [
  { t: "Views (all)", pl: 20, ic: "views", sel: true }, { t: "Floor Plans", pl: 47 }, { t: "Level 1", pl: 67, bold: true }, { t: "Level 2", pl: 67 }, { t: "Site", pl: 67 },
  { t: "Ceiling Plans", pl: 47 }, { t: "Level 1", pl: 67 }, { t: "Level 2", pl: 67 }, { t: "Elevations (Building Elevation)", pl: 47 },
  { t: "East", pl: 67 }, { t: "North", pl: 67 }, { t: "South", pl: 67 }, { t: "West", pl: 67 },
  { t: "Legends", pl: 20, ic: "legends" }, { t: "Schedules/Quantities (all)", pl: 20, ic: "sched" }, { t: "Sheets (all)", pl: 20, ic: "sheets" },
  { t: "Families", pl: 20, ic: "fam" }, { t: "Groups", pl: 20, ic: "groups" }, { t: "Revit Links", pl: 20, ic: "links" },
];

const Close = ({ s = 10, c = "#333" }: { s?: number; c?: string }) => (
  <Ic s={s} v={10}><path d="M1 1l8 8M9 1l-8 8" stroke={c} strokeWidth="1.7" /></Ic>
);
const Chevron = ({ c = "#9a9a9a" }: { c?: string }) => (
  <Ic s={10} v={10}><path d="M1 3l4 4 4-4" fill="none" stroke={c} /></Ic>
);

const TreeDrawing = () => {
  const y = (i: number) => 9.5 + i * 18;
  const h = (x1: number, x2: number, i: number) => <path key={`${x1}-${i}`} d={`M${x1} ${y(i)}H${x2}`} />;
  const Box = ({ x, i, plus }: { x: number; i: number; plus?: boolean }) => (
    <g>
      <rect x={x - 4.5} y={y(i) - 4.5} width="9" height="9" fill="#eee" stroke="#999" />
      <path d={`M${x - 2.5} ${y(i)}h5${plus ? `M${x} ${y(i) - 2.5}v5` : ""}`} stroke="#333" />
    </g>
  );
  return (
    <TreeLines width="120" height="360">
      <g stroke="#999" strokeDasharray="1 1" fill="none">
        <path d={`M9.5 ${y(0)}V${y(18)}M29.5 ${y(0)}V${y(8)}M49.5 ${y(1)}V${y(4)}M49.5 ${y(5)}V${y(7)}M49.5 ${y(8)}V${y(12)}`} />
        {h(14, 20, 0)}
        {[1, 5, 8].map(i => h(34, 46, i))}
        {[2, 3, 4, 6, 7, 9, 10, 11, 12].map(i => h(50, 64, i))}
        {[13, 14, 15, 16, 17, 18].map(i => h(10, 20, i))}
      </g>
      <Box x={9.5} i={0} /><Box x={29.5} i={1} /><Box x={29.5} i={5} /><Box x={29.5} i={8} />
      <Box x={9.5} i={16} plus /><Box x={9.5} i={17} plus />
    </TreeLines>
  );
};

const ElevMark = ({ x, y, rot }: { x: number; y: number; rot: number }) => (
  <Marker $x={x} $y={y} width="22" height="22" viewBox="0 0 22 22">
    <g transform={`rotate(${rot} 11 11)`}>
      <circle cx="11" cy="11" r="7" fill="#fff" stroke="#111" strokeWidth="1.3" />
      <path d="M5.5 15L11 20L16.5 15Q11 18.5 5.5 15Z" fill="#111" />
      <rect x="10.5" y="10.5" width="1" height="1" fill="#999" />
    </g>
  </Marker>
);

const NavDrawing = () => (
  <svg width="30" height="114" viewBox="0 0 30 114" style={{ display: "block" }}>
    <circle cx="25" cy="6" r="3.6" fill="#c4c4c4" /><path d="M23.5 4.5l3 3M26.5 4.5l-3 3" stroke="#fff" />
    <path d="M4 24q0-6 5-6h10q3 0 3 3v9q0 4-4 4H9q-5 0-5-5z" fill="#f5f5f5" stroke="#b0b0b0" strokeWidth="1.3" />
    <circle cx="13" cy="27" r="4.5" fill="none" stroke="#b0b0b0" strokeWidth="1.3" />
    <text x="20" y="40" fontSize="9" fontWeight="700" textAnchor="middle" fontFamily="Liberation Sans" fill="#5aa3d8">2D</text>
    <path d="M11 49h6l-3 3z" fill="#999" />
    <path d="M2 57h26" stroke="#c8c8c8" />
    <rect x="7" y="64" width="10" height="10" fill="#c9cf9c" stroke="#8bb07a" />
    <circle cx="17" cy="76" r="3.4" fill="#eee" stroke="#888" /><path d="M19.5 78.5l3 3" stroke="#777" strokeWidth="1.5" />
    <path d="M11 91h6l-3 3z" fill="#999" />
    <circle cx="25" cy="108" r="3.6" fill="#c4c4c4" /><path d="M23 108h4" stroke="#fff" />
  </svg>
);

export default function App() {
  return (
    <Page>
      <Global />
      <Hidden>
        <defs>
          <linearGradient id="gv" x1="0" y1="0" x2="0" y2="1"><stop offset="0" stopColor="#c9c9c9" /><stop offset="1" stopColor="#f6f6f6" /></linearGradient>
          <pattern id="ht" width="3" height="3" patternUnits="userSpaceOnUse"><rect width="3" height="3" fill="#bdbdbd" /><path d="M0 3L3 0" stroke="#6a6a6a" strokeWidth=".8" /></pattern>
          <pattern id="ck" width="10" height="8" patternUnits="userSpaceOnUse"><rect width="10" height="8" fill="#4ea4e6" /><rect width="5" height="4" fill="#bfe0f7" /><rect x="5" y="4" width="5" height="4" fill="#bfe0f7" /></pattern>
        </defs>
      </Hidden>

      <TitleBar>
        <Qat>
          {qat.map((it, i) =>
            it.t === "s" ? <QatSep key={i} $ml={it.ml} /> :
            it.t === "c" ? <QatSlot key={i} $ml={it.ml}><Caret /></QatSlot> :
            <QatSlot key={i} $ml={it.ml}><Ic s={it.k === "drop" ? 14 : 20} v={20}>{q[it.k!]}</Ic></QatSlot>
          )}
        </Qat>
        <WindowTitle>Autodesk Revit 2021 - Project1 - Floor Plan: Level 1</WindowTitle>
        <TitleRight>
          <Ic s={8} v={8}><path d="M6 0v8L1 4z" fill="#333" /></Ic>
          <WinBtn $ml={6}><Ic s={18} v={20}>{q.bino}</Ic></WinBtn>
          <WinBtn $ml={5}><Ic s={18} v={20}>{q.user}</Ic></WinBtn>
          <SignIn>Sign In</SignIn>
          <Caret />
          <WinBtn $ml={6}><Ic s={20} v={20}>{q.cart}</Ic></WinBtn>
          <TitleSep />
          <WinBtn $ml={0}><Ic s={18} v={20}>{q.help}</Ic></WinBtn>
          <WinBtn $ml={5}><Caret /></WinBtn>
          <WinBtn $ml={67}><Ic s={12} v={12}><path d="M2 10h8" stroke="#222" strokeWidth="2" /></Ic></WinBtn>
          <WinBtn $ml={10}><Ic s={14} v={14}><path d="M4 4V1h9v8h-3M1 4h9v9H1zM1 5h9" fill="none" stroke="#222" strokeWidth="1.3" /></Ic></WinBtn>
          <WinBtn $ml={8}><Ic s={12} v={12}><path d="M1 1l11 11M12 1L1 12" stroke="#222" strokeWidth="1.6" /></Ic></WinBtn>
        </TitleRight>
      </TitleBar>

      <TabRow>
        <FileTab>File</FileTab>
        {tabs.map((t, i) => <Tab key={t} $active={i === 0}>{t}</Tab>)}
        <TabExtra>
          <Ic s={16} v={16}><rect x="1" y="4" width="14" height="8" rx="2" fill="#eee" stroke="#333" /><path d="M5 10l3-4 3 4z" fill="#333" /></Ic>
          <Caret />
        </TabExtra>
      </TabRow>

      <Ribbon>
        <Panel $w={56}>
          <ToolRow>
            <ModifyBtn><Modify /><ModifyLabel>Modify</ModifyLabel></ModifyBtn>
          </ToolRow>
          <PanelTitle>Select <Caret /></PanelTitle>
        </Panel>
        {panels.map((p, i) => (
          <Panel key={p.title} $w={p.w} $last={i === panels.length - 1}>
            <ToolRow>
              {p.tools.map(t => (
                <Tool key={t.k} $w={t.w} $off={t.off}>
                  <ToolIcon><Ic>{ribbonIcons[t.k]}</Ic></ToolIcon>
                  <ToolLabel>{t.l}</ToolLabel>
                  {t.caret && <ToolCaret />}
                  {t.side !== undefined && <SideCaret $r={t.side} />}
                </Tool>
              ))}
            </ToolRow>
            <PanelTitle>{p.title}{p.titleCaret && <Caret />}</PanelTitle>
          </Panel>
        ))}
      </Ribbon>
      <OptionsStrip />

      <Main>
        <Browser>
          <PaneTitle>Project Browser - Project1<Close /></PaneTitle>
          <Tree>
            <TreeDrawing />
            {treeRows.map((r, i) => (
              <TreeRow key={i} $pl={r.pl} $bold={r.bold}>
                {r.ic && <TreeIcon><Ic s={18} v={18}>{tree[r.ic]}</Ic></TreeIcon>}
                <TreeText $sel={r.sel}>{r.t}</TreeText>
              </TreeRow>
            ))}
          </Tree>
        </Browser>

        <Center>
          <DocTabs>
            <DocTab>
              <Ic s={16} v={16}><path d="M2 3h7v2h5v9H2z" fill="#fff" stroke="#444" /><path d="M6 7h5v5H6z" fill="none" stroke="#444" strokeDasharray="1 1" /></Ic>
              <DocTabName>Level 1</DocTabName>
              <Close />
            </DocTab>
            <DocMenu><Ic s={10} v={10}><path d="M1 2h8" stroke="#333" strokeWidth="1.3" /><path d="M1 5h8L5 9z" fill="#333" /></Ic></DocMenu>
          </DocTabs>
          <CanvasWrap>
            <CanvasRow>
              <Canvas>
                <ElevMark x={575} y={89} rot={0} />
                <ElevMark x={270} y={393} rot={-90} />
                <ElevMark x={879} y={393} rot={90} />
                <ElevMark x={575} y={699} rot={180} />
                <NavBar><NavDrawing /></NavBar>
              </Canvas>
              <VScroll>
                <Ic s={10} v={10}><path d="M1 6l4-4 4 4" fill="none" stroke="#444" strokeWidth="1.6" /></Ic>
                <VThumb />
                <Ic s={10} v={10}><path d="M1 3l4 4 4-4" fill="none" stroke="#444" strokeWidth="1.6" /></Ic>
              </VScroll>
            </CanvasRow>
            <ViewBar>
              <ViewScale>1 : 100</ViewScale>
              <ViewIcons>
                {vb.map((c, i) => <Ic key={i} s={16} v={16}>{c}</Ic>)}
                <Ic s={12} v={10}><path d="M7 1L3 5l4 4" fill="none" stroke="#333" strokeWidth="1.5" /></Ic>
              </ViewIcons>
              <HThumb />
              <BarEnd>
                <Ic s={10} v={10}><path d="M3 1l4 4-4 4" fill="none" stroke="#333" strokeWidth="1.6" /></Ic>
                <Ic s={10} v={10}><path d="M7 2h1M7 5h1M4 5h1M7 8h1M4 8h1M1 8h1" stroke="#aaa" /></Ic>
              </BarEnd>
            </ViewBar>
          </CanvasWrap>
        </Center>

        <Props>
          <PropsTitle>Properties<Close /></PropsTitle>
          <Preview>
            <PreviewBox>
              <Ic s={32} v={32}>
                <path d="M3 2H19V6H24V28H3Z" fill="url(#gv)" stroke="#333" strokeWidth="1.2" />
                <rect x="12" y="11" width="18" height="19" fill="#f6f6f6" stroke="#333" strokeDasharray="2 1" />
              </Ic>
            </PreviewBox>
            Floor Plan
          </Preview>
          <SelectRow>
            <TypeSelect>Floor Plan: Level 1<Chevron c="#555" /></TypeSelect>
            <EditType>
              <Ic s={18} v={18}><rect x="1" y="2" width="7" height="6" fill="#fff" stroke="#333" /><rect x="10" y="2" width="7" height="6" fill="#fff" stroke="#333" /><rect x="1" y="10" width="7" height="7" fill="#fff" stroke="#333" /><rect x="9" y="9" width="8" height="8" fill="#e8f1fa" stroke="#333" /></Ic>
              Edit Type
            </EditType>
          </SelectRow>
          <PropArea>
            <PropList>
              {sections.map(sec => (
                <React.Fragment key={sec.name}>
                  <Category>{sec.name}<Ic s={9} v={9}><path d="M1 4l3.5-3L8 4M1 8l3.5-3L8 8" fill="none" stroke="#222" strokeWidth="1.2" /></Ic></Category>
                  {sec.rows.map((r, i) => (
                    <Row key={i} $off={r.off}>
                      <RowLabel>{r.l}</RowLabel>
                      <RowValue>
                        {r.kind === "btn" ? <RowButton>{r.v}</RowButton> :
                         r.kind === "check" ? <Check /> :
                         r.kind === "focus" ? <RowFocus>{r.v}</RowFocus> : r.v}
                      </RowValue>
                      <div />
                    </Row>
                  ))}
                </React.Fragment>
              ))}
            </PropList>
            <PropScroll><PropThumb /></PropScroll>
          </PropArea>
          <HelpRow>
            <HelpLink>Properties help</HelpLink>
            <ApplyBtn>Apply</ApplyBtn>
          </HelpRow>
        </Props>
      </Main>

      <Status>
        <StatusText>Click to select, TAB for alternates, CTRL adds, SHIFT unselects.</StatusText>
        <Ic s={18} v={18}>{st.work}</Ic>
        <Combo $ml={6}><span /><Chevron /></Combo>
        <StatusSlot $ml={7}><Ic s={18} v={18}>{st.design}</Ic><Count>:0</Count></StatusSlot>
        <StatusSlot $ml={25}><Ic s={18} v={18}>{st.list}</Ic></StatusSlot>
        <StatusSlot $ml={8}><Ic s={18} v={18}>{st.edit}</Ic></StatusSlot>
        <Combo $ml={7}>Main Model<Chevron /></Combo>
        <StatusSlot $ml={226}><Ic s={18} v={18}>{st.s1}</Ic></StatusSlot>
        {["s2", "s3", "s4", "s5", "s6", "s7"].map(k => <StatusSlot key={k} $ml={7}><Ic s={18} v={18}>{st[k]}</Ic></StatusSlot>)}
        <Count>:0</Count>
      </Status>

      <RedBox />
      <ArrowLayer width="420" height="500" viewBox="0 0 420 500">
        <path d="M389 484L150 141" stroke="#fa0000" strokeWidth="6" />
        <path d="M137 120L162 135L138 150Z" fill="#fa0000" />
      </ArrowLayer>
      <Watermark>
        <WmBig>Activate Windows</WmBig>
        <WmSmall>Go to Settings to activate Windows.</WmSmall>
      </Watermark>
    </Page>
  );
}
